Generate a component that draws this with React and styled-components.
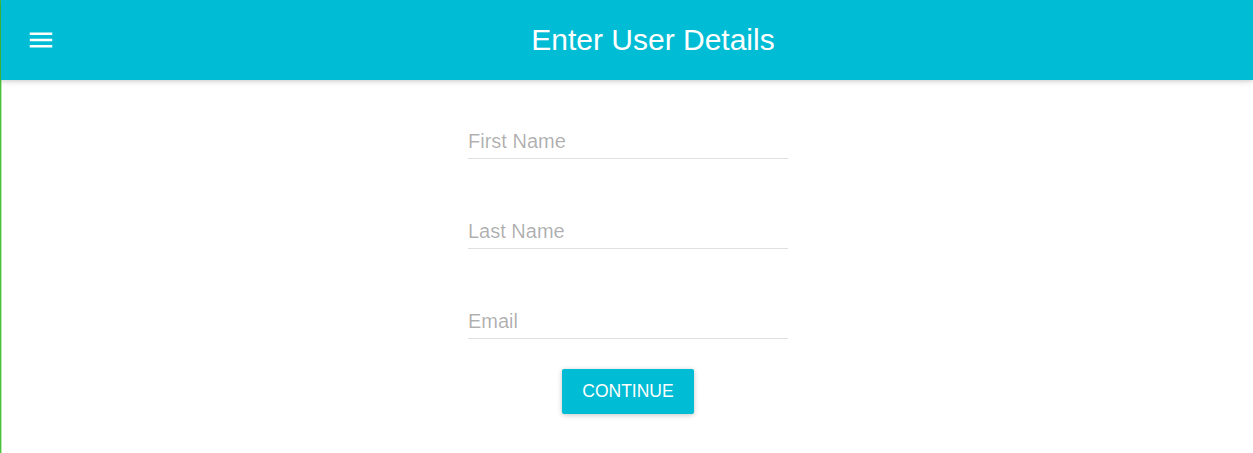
import React from 'react'
import styled, { createGlobalStyle } from 'styled-components'

const colors = {
	primary: '#00bcd4',
	hint: 'rgba(0, 0, 0, 0.32)',
	line: '#e0e0e0',
}

const GlobalStyle = createGlobalStyle`
	html, body {
		margin: 0;
		padding: 0;
		background: #fff;
		font-family: 'Liberation Sans', Arial, sans-serif;
	}
`

const App = () => {
	return (
		<StyledPage>
			<GlobalStyle />
			<StyledAppBar>
				<StyledMenuButton type='button' aria-label='menu'>
					<svg viewBox='0 0 24 24' width='30' height='30' fill='#fff'>
						<path d='M3 18h18v-2H3v2zm0-5h18v-2H3v2zm0-7v2h18V6H3z' />
					</svg>
				</StyledMenuButton>
				<h1>Enter User Details</h1>
			</StyledAppBar>

			<StyledForm>
				<StyledField>
					<input type='text' placeholder='First Name' />
				</StyledField>
				<StyledField>
					<input type='text' placeholder='Last Name' />
				</StyledField>
				<StyledField>
					<input type='email' placeholder='Email' />
				</StyledField>
				<StyledButton type='button'>Continue</StyledButton>
			</StyledForm>
		</StyledPage>
	)
}

const StyledPage = styled.div`
	min-height: 453px;
	border-left: 1px solid #47c23a;
	box-shadow: inset 1px 0 0 #b9e9b0;
	box-sizing: border-box;
`

const StyledAppBar = styled.header`
	display: flex;
	align-items: center;
	height: 80px;
	padding: 0 30px;
	background: ${colors.primary};
	box-shadow: 0 1px 8px rgba(0, 0, 0, 0.12), 0 1px 4px rgba(0, 0, 0, 0.12);
	position: relative;
	z-index: 1;

	h1 {
		flex: 1;
		margin: 0;
		text-align: center;
		color: #fff;
		font-size: 30px;
		font-weight: 400;
		line-height: 80px;
		padding-left: 2px;
	}
`

const StyledMenuButton = styled.button`
	display: flex;
	align-items: center;
	justify-content: center;
	width: 60px;
	height: 60px;
	margin: 0 10px 0 -20px;
	padding: 0;
	border: none;
	background: transparent;
	cursor: pointer;
`

const StyledForm = styled.main`
	display: flex;
	flex-direction: column;
	align-items: center;
	padding-left: 2px;
`

const StyledField = styled.div`
	display: flex;
	align-items: flex-end;
	width: 320px;
	height: 90px;
	padding-bottom: 11px;
	box-sizing: border-box;

	input {
		width: 100%;
		height: 33px;
		padding: 0 0 2px;
		box-sizing: border-box;
		border: none;
		border-bottom: 1px solid ${colors.line};
		outline: none;
		background: transparent;
		font-family: 'Liberation Sans', Arial, sans-serif;
		font-size: 20px;
		line-height: 30px;
		color: rgba(0, 0, 0, 0.87);

		&::placeholder {
			color: ${colors.hint};
		}
	}
`

const StyledButton = styled.button`
	margin-top: 19px;
	width: 132px;
	height: 45px;
	border: none;
	border-radius: 2px;
	background: ${colors.primary};
	color: #fff;
	font-family: 'Liberation Sans', Arial, sans-serif;
	font-size: 17.5px;
	text-transform: uppercase;
	box-shadow: 0 1px 6px rgba(0, 0, 0, 0.12), 0 1px 4px rgba(0, 0, 0, 0.12);
	cursor: pointer;
`

export default App
